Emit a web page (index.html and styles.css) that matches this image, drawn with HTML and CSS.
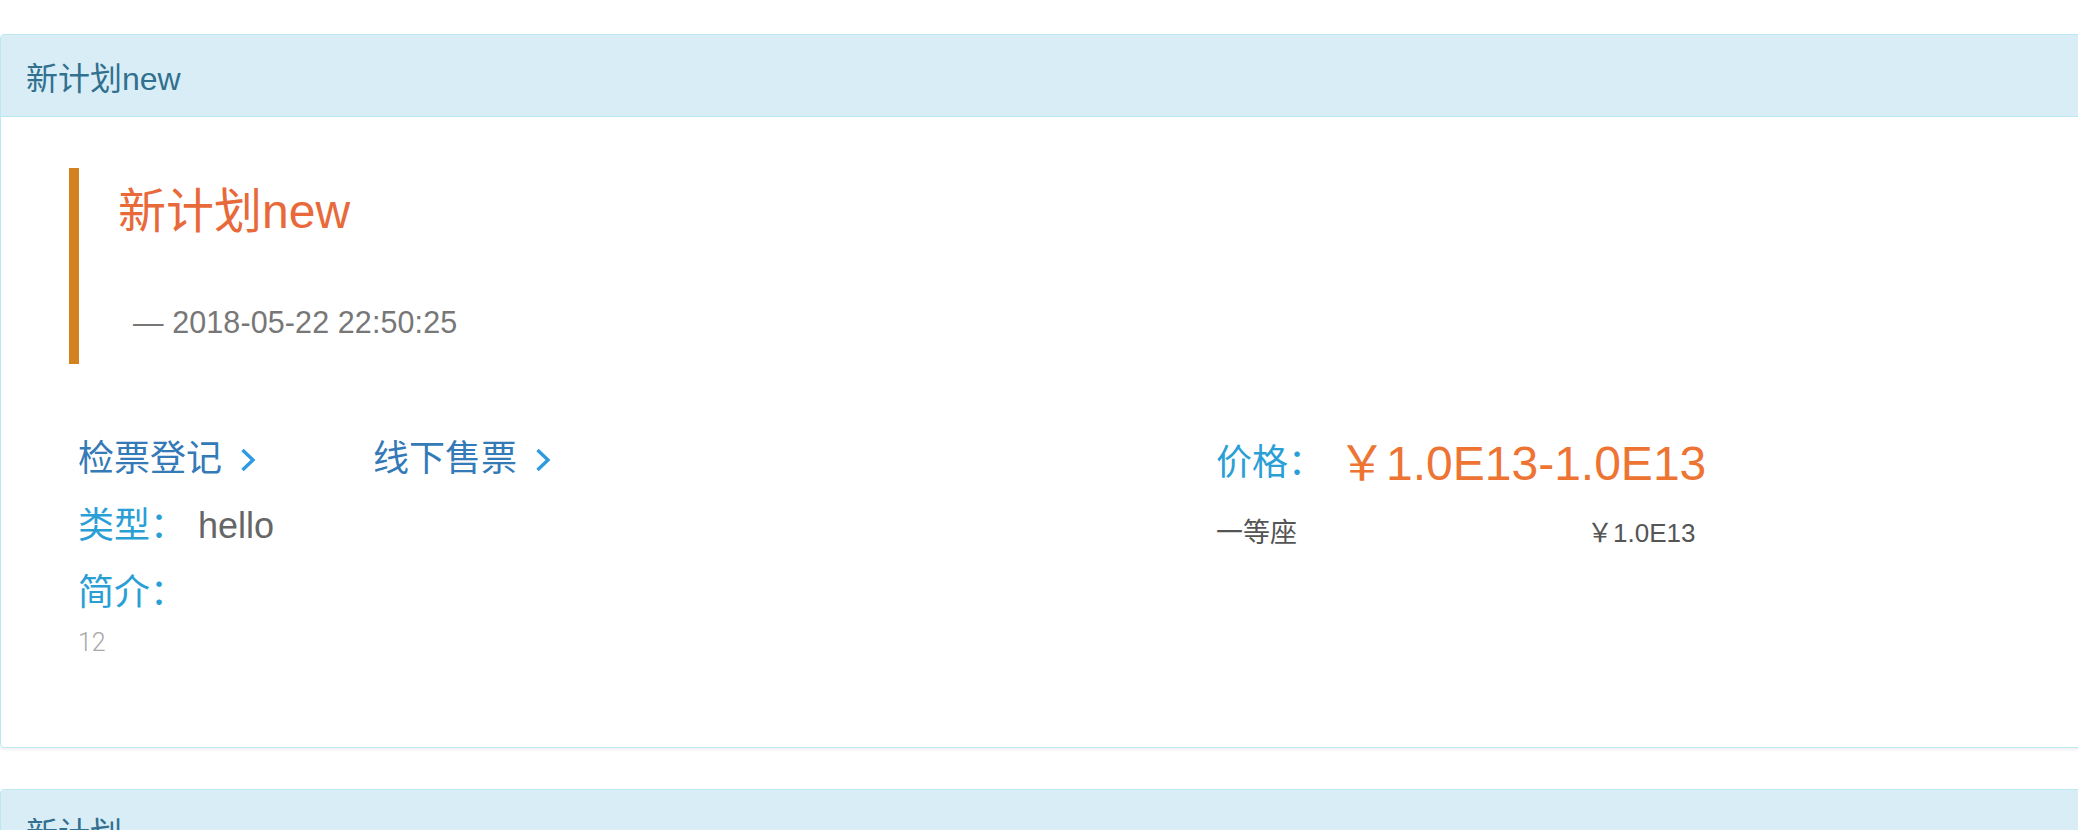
FILE: index.html
```html
<!DOCTYPE html>
<html lang="zh-CN">
<head>
<meta charset="utf-8">
<title>计划</title>
<link rel="stylesheet" href="styles.css">
</head>
<body>
<div class="page">
  <section class="panel">
    <div class="panel-heading">新计划new</div>
    <div class="panel-body">
      <blockquote class="plan-quote">
        <h2 class="plan-title">新计划new</h2>
        <footer class="plan-date">— 2018-05-22 22:50:25</footer>
      </blockquote>
      <div class="plan-info">
        <div class="info-left">
          <div class="links">
            <a class="link" href="#">检票登记 <svg class="chev" viewBox="0 0 16 24" width="16" height="24"><polyline points="2.5,2 13,12 2.5,22" fill="none" stroke="currentColor" stroke-width="3.4" stroke-linejoin="miter" stroke-linecap="butt"/></svg></a>
            <a class="link" href="#">线下售票 <svg class="chev" viewBox="0 0 16 24" width="16" height="24"><polyline points="2.5,2 13,12 2.5,22" fill="none" stroke="currentColor" stroke-width="3.4" stroke-linejoin="miter" stroke-linecap="butt"/></svg></a>
          </div>
          <div class="row"><span class="label">类型：</span> <span class="value">hello</span></div>
          <div class="row"><span class="label">简介：</span></div>
          <div class="desc">12</div>
        </div>
        <div class="info-right">
          <div class="price-row"><span class="label">价格：</span><span class="price">￥1.0E13-1.0E13</span></div>
          <div class="seat-row"><span class="seat-name">一等座</span><span class="seat-price">￥1.0E13</span></div>
        </div>
      </div>
    </div>
  </section>
  <section class="panel">
    <div class="panel-heading">新计划</div>
    <div class="panel-body"></div>
  </section>
</div>
</body>
</html>
```
FILE: styles.css
```css
html, body {
  margin: 0;
  padding: 0;
  background: #fff;
}
body {
  font-family: "Liberation Sans", "Noto Sans CJK SC", sans-serif;
  color: #333;
  overflow: hidden;
}
.page {
  padding-top: 34px;
}
.panel {
  border: 1px solid #bce8f1;
  border-radius: 4px;
  margin: 0 -12px 41px 0;
  background: #fff;
  box-shadow: 0 2px 3px rgba(0, 0, 0, 0.06);
}
.panel-heading {
  height: 81px;
  display: flex;
  align-items: center;
  padding: 0 25px;
  background: #d9edf7;
  color: #31708f;
  border-bottom: 1px solid #bce8f1;
  border-radius: 3px 3px 0 0;
  font-size: 32px;
}
.panel-body {
  padding: 51px 0 87px 68px;
}
.plan-quote {
  margin: 0;
  border-left: 10px solid #d3821f;
  height: 196px;
  box-sizing: border-box;
  padding: 15px 0 0 39px;
}
.plan-title {
  margin: 0;
  font-weight: normal;
  font-size: 48px;
  line-height: 58px;
  color: #e8693a;
}
.plan-date {
  margin-top: 60px;
  padding-left: 15px;
  font-size: 30.5px;
  letter-spacing: 0.1px;
  line-height: 42px;
  color: #777;
}
.plan-info {
  display: grid;
  grid-template-columns: 1138px 1fr;
  margin-top: 61px;
  padding-left: 9px;
}
.links {
  display: flex;
  gap: 117px;
  line-height: 67px;
  height: 67px;
}
.link {
  display: flex;
  align-items: center;
  gap: 18px;
  font-size: 36px;
  color: #337ab7;
  text-decoration: none;
}
.chev {
  color: #2f9ae0;
  margin-top: 3px;
}
.row {
  height: 67px;
  line-height: 67px;
  font-size: 36px;
}
.label {
  color: #2a9fd6;
  font-size: 36px;
}
.value {
  color: #666;
  margin-left: 2px;
}
.desc {
  line-height: 34px;
  font-family: Roboto, "Liberation Sans", sans-serif;
  font-weight: 300;
  font-size: 25px;
  color: #a8a8a8;
}
.price-row {
  display: flex;
  align-items: center;
  gap: 14px;
  height: 67px;
}
.price {
  font-size: 48px;
  color: #ee7433;
}
.seat-row {
  display: grid;
  grid-template-columns: 371px auto;
  margin-top: 16px;
  line-height: 50px;
  font-size: 27px;
  color: #555;
}
.seat-price {
  font-size: 26px;
}
```
